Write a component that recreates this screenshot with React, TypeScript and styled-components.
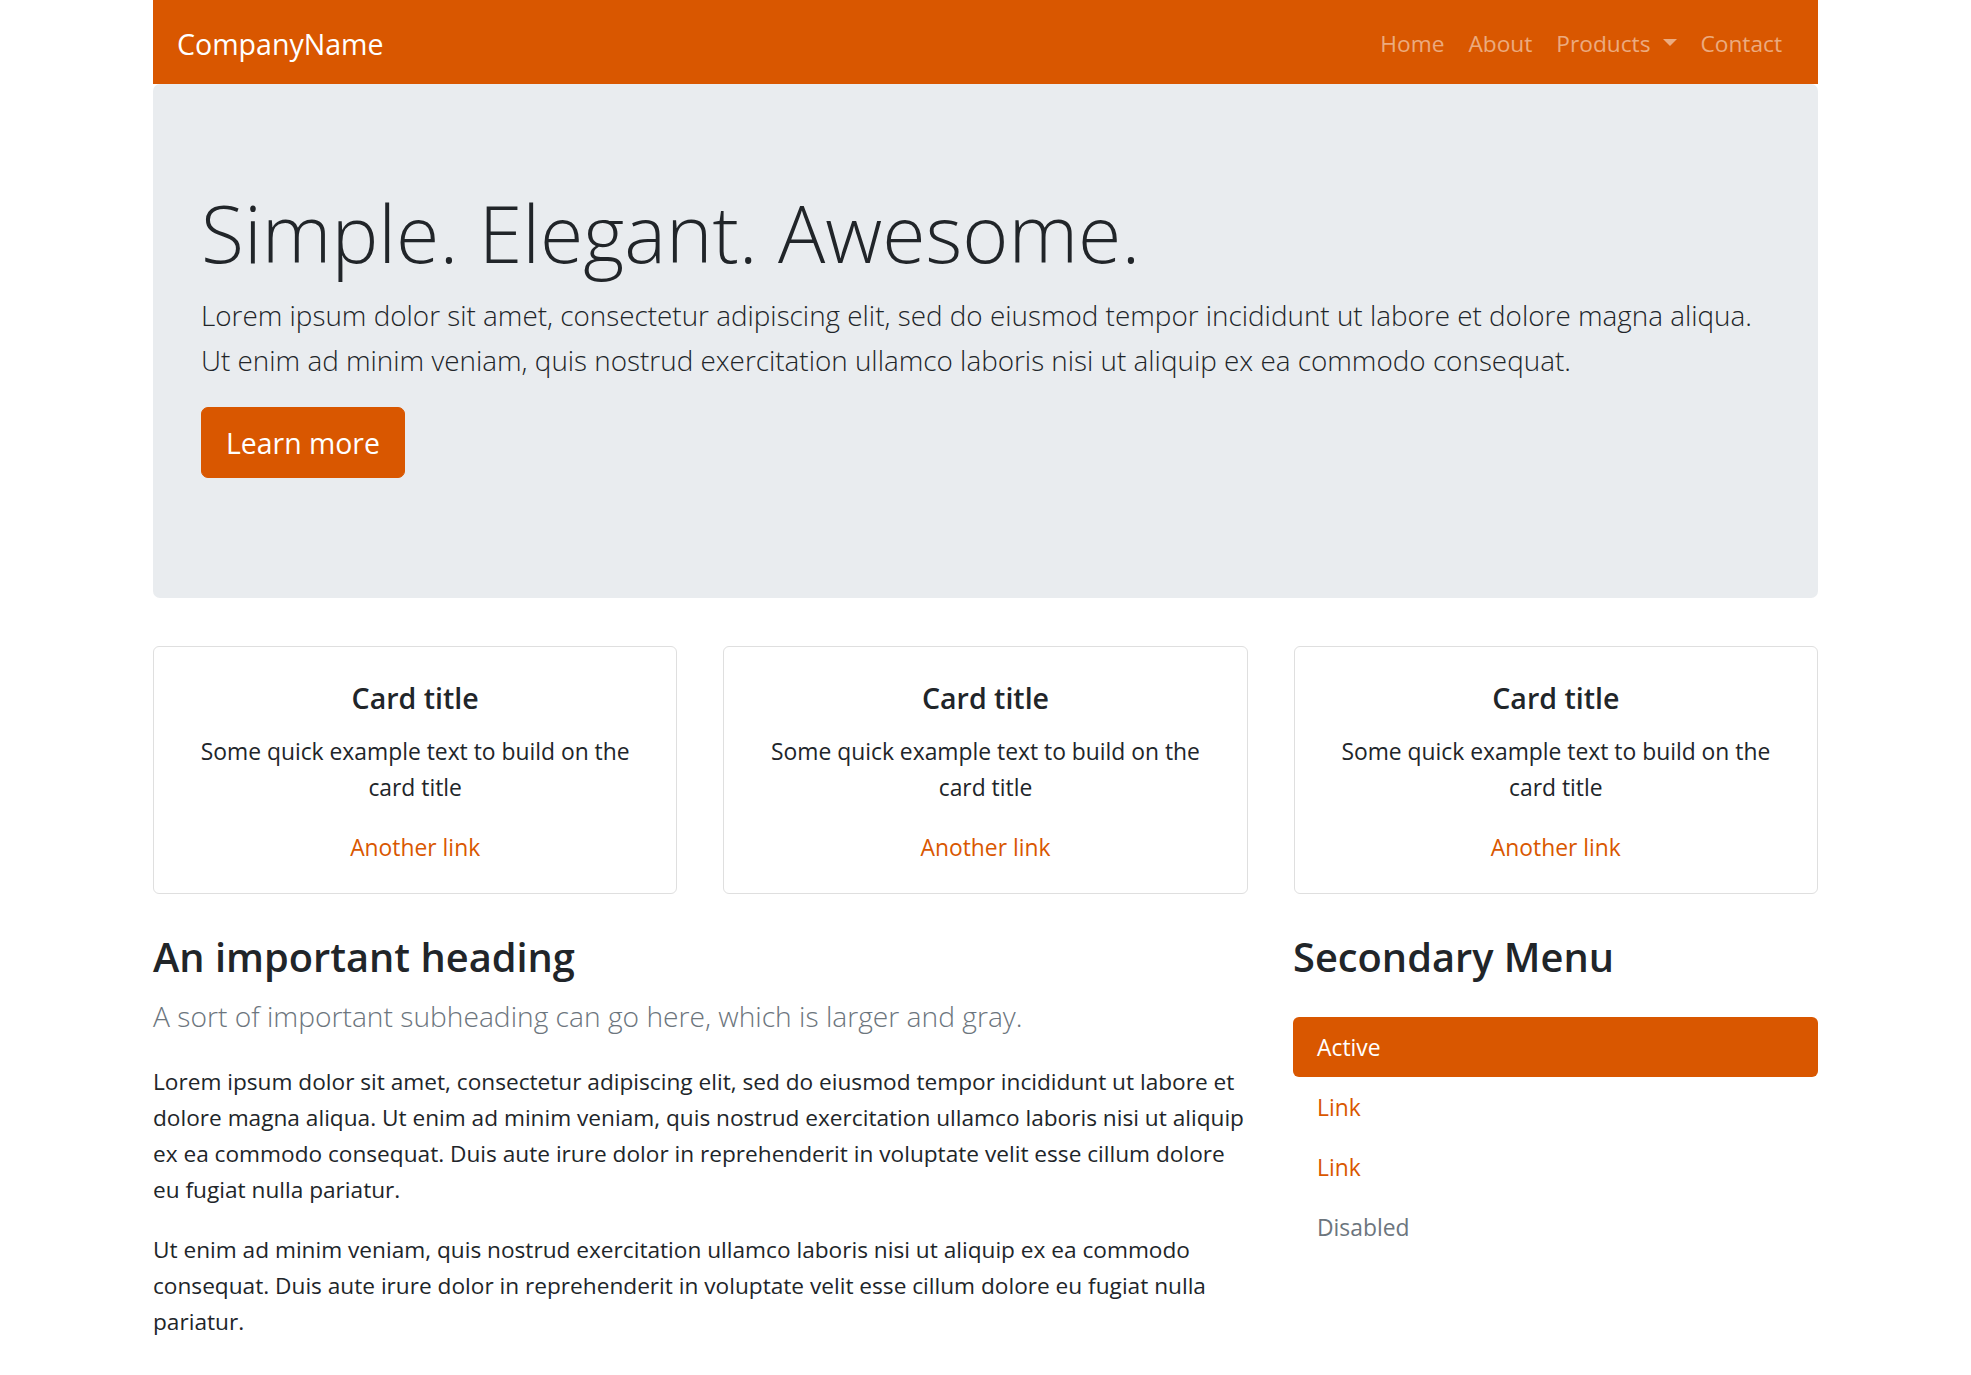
import React from "react";
import styled, { createGlobalStyle, css } from "styled-components";

const ORANGE = "#d95700";
const TEXT = "#212529";
const MUTED = "#6c757d";

const GlobalStyle = createGlobalStyle`
  html, body { margin: 0; padding: 0; background: #fff; }
  body {
    font-family: "Open Sans", "Noto Sans", sans-serif;
    color: ${TEXT};
    font-size: 22.85px;
    line-height: 36px;
  }
  * { box-sizing: border-box; }
`;

const Container = styled.div`
  width: 1665px;
  margin: 0 auto;
`;

const Navbar = styled.nav`
  display: flex;
  align-items: center;
  justify-content: space-between;
  background: ${ORANGE};
  padding: 13px 24px 11px;
  height: 84px;
`;

const Brand = styled.a`
  color: #fff;
  font-size: 28.56px;
  line-height: 45px;
  padding: 7.5px 0;
  text-decoration: none;
`;

const NavList = styled.ul`
  display: flex;
  list-style: none;
  margin: 0;
  padding: 0;
`;

const NavLink = styled.a`
  display: flex;
  align-items: center;
  padding: 13px 12px 11px;
  font-size: 22.7px;
  line-height: 36px;
  color: rgba(255, 255, 255, 0.5);
  text-decoration: none;
`;

const Caret = styled.span`
  display: inline-block;
  margin-left: 12px;
  margin-top: -3px;
  border-top: 7.2px solid rgba(255, 255, 255, 0.5);
  border-left: 7.2px solid transparent;
  border-right: 7.2px solid transparent;
`;

const Jumbotron = styled.section`
  background: #e9ecef;
  border-radius: 7px;
  padding: 96px 48px;
  margin-bottom: 48px;
`;

const Display = styled.h1`
  margin: 0 0 10px;
  padding-top: 3px;
  font-size: 78.8px;
  font-weight: 300;
  line-height: 100px;
`;

const Lead = styled.p<{ $muted?: boolean; $size: number; $space?: number }>`
  margin: 0 0 ${(p) => p.$space ?? 24}px;
  font-size: ${(p) => p.$size}px;
  font-weight: 300;
  line-height: 45px;
  color: ${(p) => (p.$muted ? MUTED : TEXT)};
`;

const ButtonRow = styled.div`
  display: flex;
  margin-bottom: 24px;
`;

const PrimaryButton = styled.a`
  display: inline-block;
  background: ${ORANGE};
  border: 1.5px solid ${ORANGE};
  border-radius: 7px;
  color: #fff;
  font-size: 28.4px;
  line-height: 45px;
  padding: 12.5px 24px 11.5px;
  text-decoration: none;
`;

const CardRow = styled.div`
  display: grid;
  grid-template-columns: repeat(3, 1fr);
  gap: 46px;
  margin-bottom: 36px;
`;

const Card = styled.div`
  border: 1.5px solid #dfdfdf;
  border-radius: 6px;
  padding: 33px 30px 27px;
  text-align: center;
`;

const CardTitle = styled.h5`
  margin: 0 0 18px;
  font-size: 28.56px;
  font-weight: 600;
  line-height: 36px;
`;

const CardText = styled.p`
  margin: 0 0 24px;
  font-size: 22.85px;
  line-height: 36px;
`;

const TextLink = styled.a`
  color: ${ORANGE};
  text-decoration: none;
  font-size: 22.85px;
  line-height: 36px;
`;

const Lower = styled.div`
  display: grid;
  grid-template-columns: 1095px 1fr;
  gap: 45px;
`;

const Heading = styled.h3<{ $space?: number }>`
  margin: 0 0 ${(p) => p.$space ?? 12}px;
  padding-top: 2px;
  font-size: 39.8px;
  font-weight: 600;
  line-height: 50px;
`;

const BodyText = styled.p`
  margin: 0 0 24px;
  font-size: 22.65px;
  line-height: 36px;
`;

const PillList = styled.nav`
  display: flex;
  flex-direction: column;
`;

const Pill = styled.a<{ $variant: "active" | "link" | "disabled" }>`
  display: block;
  padding: 13px 24px 11px;
  border-radius: 6px;
  font-size: 22.85px;
  line-height: 36px;
  text-decoration: none;
  ${(p) =>
    p.$variant === "active"
      ? css`
          background: ${ORANGE};
          color: #fff;
        `
      : p.$variant === "link"
      ? css`
          color: ${ORANGE};
        `
      : css`
          color: ${MUTED};
        `}
`;

const cards = [1, 2, 3];

export default function App() {
  return (
    <>
      <GlobalStyle />
      <Container>
        <Navbar>
          <Brand href="#">CompanyName</Brand>
          <NavList>
            <li>
              <NavLink href="#">Home</NavLink>
            </li>
            <li>
              <NavLink href="#">About</NavLink>
            </li>
            <li>
              <NavLink href="#">
                Products
                <Caret />
              </NavLink>
            </li>
            <li>
              <NavLink href="#">Contact</NavLink>
            </li>
          </NavList>
        </Navbar>

        <Jumbotron>
          <Display>Simple. Elegant. Awesome.</Display>
          <Lead $size={27.85}>
            Lorem ipsum dolor sit amet, consectetur adipiscing elit, sed do eiusmod tempor incididunt ut labore et
            dolore magna aliqua. Ut enim ad minim veniam, quis nostrud exercitation ullamco laboris nisi ut aliquip ex
            ea commodo consequat.
          </Lead>
          <ButtonRow>
            <PrimaryButton href="#">Learn more</PrimaryButton>
          </ButtonRow>
        </Jumbotron>

        <CardRow>
          {cards.map((c) => (
            <Card key={c}>
              <CardTitle>Card title</CardTitle>
              <CardText>Some quick example text to build on the card title</CardText>
              <TextLink href="#">Another link</TextLink>
            </Card>
          ))}
        </CardRow>

        <Lower>
          <div>
            <Heading>An important heading</Heading>
            <Lead $muted $size={28.2} $space={25}>
              A sort of important subheading can go here, which is larger and gray.
            </Lead>
            <BodyText>
              Lorem ipsum dolor sit amet, consectetur adipiscing elit, sed do eiusmod tempor incididunt ut labore et
              dolore magna aliqua. Ut enim ad minim veniam, quis nostrud exercitation ullamco laboris nisi ut aliquip
              ex ea commodo consequat. Duis aute irure dolor in reprehenderit in voluptate velit esse cillum dolore eu
              fugiat nulla pariatur.
            </BodyText>
            <BodyText>
              Ut enim ad minim veniam, quis nostrud exercitation ullamco laboris nisi ut aliquip ex ea commodo
              consequat. Duis aute irure dolor in reprehenderit in voluptate velit esse cillum dolore eu fugiat nulla
              pariatur.
            </BodyText>
          </div>
          <div>
            <Heading $space={35}>Secondary Menu</Heading>
            <PillList>
              <Pill $variant="active" href="#">
                Active
              </Pill>
              <Pill $variant="link" href="#">
                Link
              </Pill>
              <Pill $variant="link" href="#">
                Link
              </Pill>
              <Pill $variant="disabled">Disabled</Pill>
            </PillList>
          </div>
        </Lower>
      </Container>
    </>
  );
}
